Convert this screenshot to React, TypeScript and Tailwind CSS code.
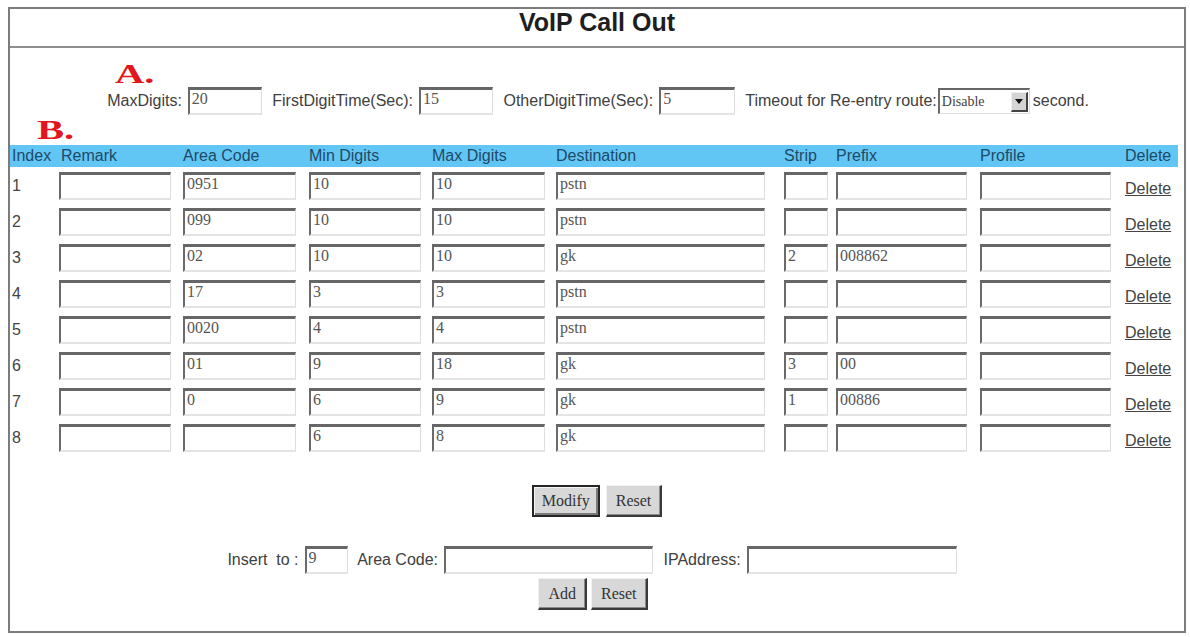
import type { ReactNode } from 'react'

const rows = [
  { area: '0951', min: '10', max: '10', dest: 'pstn', strip: '', prefix: '' },
  { area: '099', min: '10', max: '10', dest: 'pstn', strip: '', prefix: '' },
  { area: '02', min: '10', max: '10', dest: 'gk', strip: '2', prefix: '008862' },
  { area: '17', min: '3', max: '3', dest: 'pstn', strip: '', prefix: '' },
  { area: '0020', min: '4', max: '4', dest: 'pstn', strip: '', prefix: '' },
  { area: '01', min: '9', max: '18', dest: 'gk', strip: '3', prefix: '00' },
  { area: '0', min: '6', max: '9', dest: 'gk', strip: '1', prefix: '00886' },
  { area: '', min: '6', max: '8', dest: 'gk', strip: '', prefix: '' },
]

const grid =
  'grid grid-cols-[47px_124px_126px_123px_124px_228px_52px_144px_145px_55px]'

function Field({ value = '', width }: { value?: string; width: string }) {
  return (
    <input
      readOnly
      value={value}
      className={`${width} h-[28px] border-t-[3px] border-l-2 border-r border-b-2 border-t-[#666] border-l-[#6a6a6a] border-r-[#dedede] border-b-[#e4e4e4] bg-white pl-[2px] pb-[5px] font-['Liberation_Serif',serif] text-[16px] text-[#555] outline-none`}
    />
  )
}

function Label({ children }: { children: ReactNode }) {
  return <span className="whitespace-pre text-[16px] text-[#404040]">{children}</span>
}

function Mark({ children, className }: { children: ReactNode; className: string }) {
  return (
    <div className={className}>
      <span className="inline-block origin-left scale-x-[1.45] font-['Liberation_Serif',serif] text-[28px] font-bold leading-none text-[#e3161d]">
        {children}
      </span>
    </div>
  )
}

function Button({ children, primary }: { children: ReactNode; primary?: boolean }) {
  return (
    <button
      className={`h-[32px] bg-[#d8d8d8] font-['Liberation_Serif',serif] text-[16px] text-[#333] ${
        primary
          ? 'border-2 border-[#262626] px-[8px] shadow-[inset_1px_1px_0_#f5f5f5,inset_-2px_-2px_0_#7a7a7a]'
          : 'border-l border-t border-r-2 border-b-2 border-l-[#f2f2f2] border-t-[#f2f2f2] border-r-[#3a3a3a] border-b-[#3a3a3a] px-[9px] shadow-[inset_-1px_-1px_0_#8a8a8a]'
      }`}
    >
      {children}
    </button>
  )
}

export default function App() {
  return (
    <div className="h-[637px] w-[1190px] bg-white pl-[8px] pt-[7px] font-['Liberation_Sans',Arial,sans-serif]">
      <div className="flex h-[626px] w-[1178px] flex-col border-2 border-[#7c7c7c]">
        <div className="h-[37px] text-center text-[25px] font-bold leading-[26px] text-[#1e1e1e]">
          VoIP Call Out
        </div>
        <div className="h-[2px] bg-[#8e8e8e]" />

        <Mark className="h-[38px] pl-[105px] pt-[12px]">A.</Mark>

        <div className="flex h-[30px] items-center justify-center gap-[6px] pl-[2px]">
          <Label>MaxDigits:</Label>
          <Field value="20" width="w-[74px]" />
          <Label> FirstDigitTime(Sec):</Label>
          <Field value="15" width="w-[74px]" />
          <Label> OtherDigitTime(Sec):</Label>
          <Field value="5" width="w-[76px]" />
          <span className="flex items-center">
            <Label> Timeout for Re-entry route:</Label>
            <span className="ml-[1px] flex h-[26px] w-[92px] items-center border-t-2 border-l-2 border-r border-b border-t-[#666] border-l-[#6a6a6a] border-r-[#dcdcdc] border-b-[#dcdcdc] bg-white">
              <span className="flex-1 pl-[2px] font-['Liberation_Serif',serif] text-[14px] leading-none text-[#444]">
                Disable
              </span>
              <span className="mr-[1px] flex h-[20px] w-[17px] items-center justify-center border-l border-t border-r-2 border-b-2 border-l-[#f0f0f0] border-t-[#f0f0f0] border-r-[#444] border-b-[#444] bg-[#d4d4d4]">
                <svg width="8" height="5" viewBox="0 0 8 5">
                  <path d="M0 0h8L4 5z" fill="#111" />
                </svg>
              </span>
            </span>
            <span className="ml-[3px]">
              <Label>second.</Label>
            </span>
          </span>
        </div>

        <Mark className="h-[29px] pl-[27px] pt-0">B.</Mark>

        <div className={`${grid} h-[22px] w-[1168px] items-center bg-[#62c6f4] text-[16px] leading-[22px] text-[#1d4a68]`}>
          <span className="pl-[2px]">Index</span>
          <span className="pl-[4px]">Remark</span>
          <span className="pl-[2px]">Area Code</span>
          <span className="pl-[2px]">Min Digits</span>
          <span className="pl-[2px]">Max Digits</span>
          <span className="pl-[2px]">Destination</span>
          <span className="pl-[2px]">Strip</span>
          <span className="pl-[2px]">Prefix</span>
          <span className="pl-[2px]">Profile</span>
          <span className="pl-[2px]">Delete</span>
        </div>

        <div className="mt-[1px] w-[1168px]">
          {rows.map((r, i) => (
            <div key={i} className={`${grid} h-[36px] items-center`}>
              <span className="pl-[2px] text-[16px] text-[#444]">{i + 1}</span>
              <span className="pl-[2px]">
                <Field width="w-[112px]" />
              </span>
              <span className="pl-[2px]">
                <Field value={r.area} width="w-[113px]" />
              </span>
              <span className="pl-[2px]">
                <Field value={r.min} width="w-[112px]" />
              </span>
              <span className="pl-[2px]">
                <Field value={r.max} width="w-[113px]" />
              </span>
              <span className="pl-[2px]">
                <Field value={r.dest} width="w-[209px]" />
              </span>
              <span className="pl-[2px]">
                <Field value={r.strip} width="w-[44px]" />
              </span>
              <span className="pl-[2px]">
                <Field value={r.prefix} width="w-[131px]" />
              </span>
              <span className="pl-[2px]">
                <Field width="w-[131px]" />
              </span>
              <span className="pl-[2px] pt-[6px]">
                <a className="text-[16px] text-[#444] underline">Delete</a>
              </span>
            </div>
          ))}
        </div>

        <div className="mt-[29px] flex h-[32px] justify-center gap-[6px]">
          <Button primary>Modify</Button>
          <Button>Reset</Button>
        </div>

        <div className="mt-[28px] flex h-[30px] items-center justify-center gap-[6px] pr-[10px]">
          <Label>Insert  to :</Label>
          <Field value="9" width="w-[43px]" />
          <Label> Area Code:</Label>
          <Field width="w-[209px]" />
          <Label> IPAddress:</Label>
          <Field width="w-[210px]" />
        </div>

        <div className="mt-[3px] flex h-[32px] justify-center gap-[4px] pr-[8px]">
          <Button>Add</Button>
          <Button>Reset</Button>
        </div>
      </div>
    </div>
  )
}
